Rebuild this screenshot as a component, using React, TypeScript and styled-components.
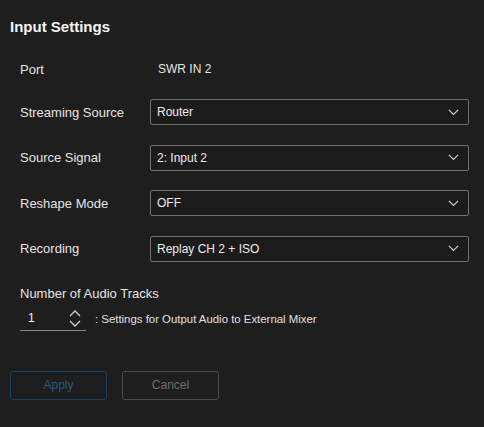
import React from 'react';
import styled, { createGlobalStyle } from 'styled-components';

const GlobalStyle = createGlobalStyle`
  html, body {
    margin: 0;
    padding: 0;
    background: #1e1e1e;
  }
  body {
    font-family: "Liberation Sans", Arial, sans-serif;
  }
`;

const Panel = styled.div`
  width: 484px;
  height: 427px;
  box-sizing: border-box;
  background: #1e1e1e;
  color: #e2e2e2;
  padding: 17px 15px 0 10px;
  display: flex;
  flex-direction: column;
`;

const Title = styled.h2`
  margin: 0;
  font-size: 15px;
  font-weight: bold;
  line-height: 20px;
  color: #f4f4f4;
`;

const Form = styled.div`
  display: flex;
  flex-direction: column;
  gap: 19.5px;
  padding-left: 10px;
  margin-top: 19px;
`;

const Row = styled.div<{ $compact?: boolean }>`
  display: grid;
  grid-template-columns: 130px 1fr;
  align-items: center;
  height: 26px;
  font-size: 13px;
  margin-bottom: ${(p) => (p.$compact ? '-2.5px' : '0')};
`;

const Label = styled.span`
  color: #e4e4e4;
`;

const Value = styled.span`
  color: #e4e4e4;
  font-size: 12px;
  padding-left: 8px;
`;

const SelectBox = styled.div`
  height: 26px;
  box-sizing: border-box;
  border: 1px solid #707070;
  border-radius: 2px;
  background: #1b1b1b;
  display: flex;
  align-items: center;
  justify-content: space-between;
  padding: 0 9px 0 6px;
  font-size: 12px;
  color: #ececec;
`;

const Section = styled.div`
  padding-left: 10px;
  margin-top: 24px;
  font-size: 13px;
`;

const SectionLabel = styled.div`
  line-height: 16px;
  color: #e4e4e4;
`;

const SpinRow = styled.div`
  display: flex;
  align-items: center;
  gap: 9px;
  margin-top: 5px;
`;

const Spinner = styled.div`
  width: 66px;
  height: 24px;
  box-sizing: border-box;
  border-bottom: 1px solid #8a8a8a;
  display: flex;
  align-items: center;
  justify-content: space-between;
  padding: 0 5px 0 8px;
  font-size: 12px;
  color: #f0f0f0;
`;

const Arrows = styled.div`
  display: flex;
  flex-direction: column;
  gap: 3px;
`;

const Hint = styled.span`
  font-size: 11.4px;
  color: #e0e0e0;
`;

const Buttons = styled.div`
  display: flex;
  gap: 15px;
  margin-top: 40px;
`;

const Button = styled.button<{ $primary?: boolean }>`
  width: 97px;
  height: 29px;
  box-sizing: border-box;
  background: transparent;
  border: 1px solid ${(p) => (p.$primary ? '#1c415e' : '#4a4a4a')};
  border-radius: 3px;
  color: ${(p) => (p.$primary ? '#2c5878' : '#6e6e6e')};
  font-family: "Liberation Sans", Arial, sans-serif;
  font-size: 12px;
  padding: 0;
`;

const Chevron = ({ up = false, size = 11 }: { up?: boolean; size?: number }) => (
  <svg width={size} height={(size * 7) / 12} viewBox="0 0 12 7" fill="none">
    <path
      d={up ? 'M1 6L6 1L11 6' : 'M1 1L6 6L11 1'}
      stroke="#cfcfcf"
      strokeWidth="1.3"
    />
  </svg>
);

const fields = [
  { label: 'Streaming Source', value: 'Router' },
  { label: 'Source Signal', value: '2: Input 2' },
  { label: 'Reshape Mode', value: 'OFF' },
  { label: 'Recording', value: 'Replay CH 2 + ISO' },
];

export default function App() {
  return (
    <>
      <GlobalStyle />
      <Panel>
        <Title>Input Settings</Title>
        <Form>
          <Row $compact>
            <Label>Port</Label>
            <Value>SWR IN 2</Value>
          </Row>
          {fields.map((f) => (
            <Row key={f.label}>
              <Label>{f.label}</Label>
              <SelectBox>
                <span>{f.value}</span>
                <Chevron />
              </SelectBox>
            </Row>
          ))}
        </Form>
        <Section>
          <SectionLabel>Number of Audio Tracks</SectionLabel>
          <SpinRow>
            <Spinner>
              <span>1</span>
              <Arrows>
                <Chevron up size={12} />
                <Chevron size={12} />
              </Arrows>
            </Spinner>
            <Hint>: Settings for Output Audio to External Mixer</Hint>
          </SpinRow>
        </Section>
        <Buttons>
          <Button $primary>Apply</Button>
          <Button>Cancel</Button>
        </Buttons>
      </Panel>
    </>
  );
}
